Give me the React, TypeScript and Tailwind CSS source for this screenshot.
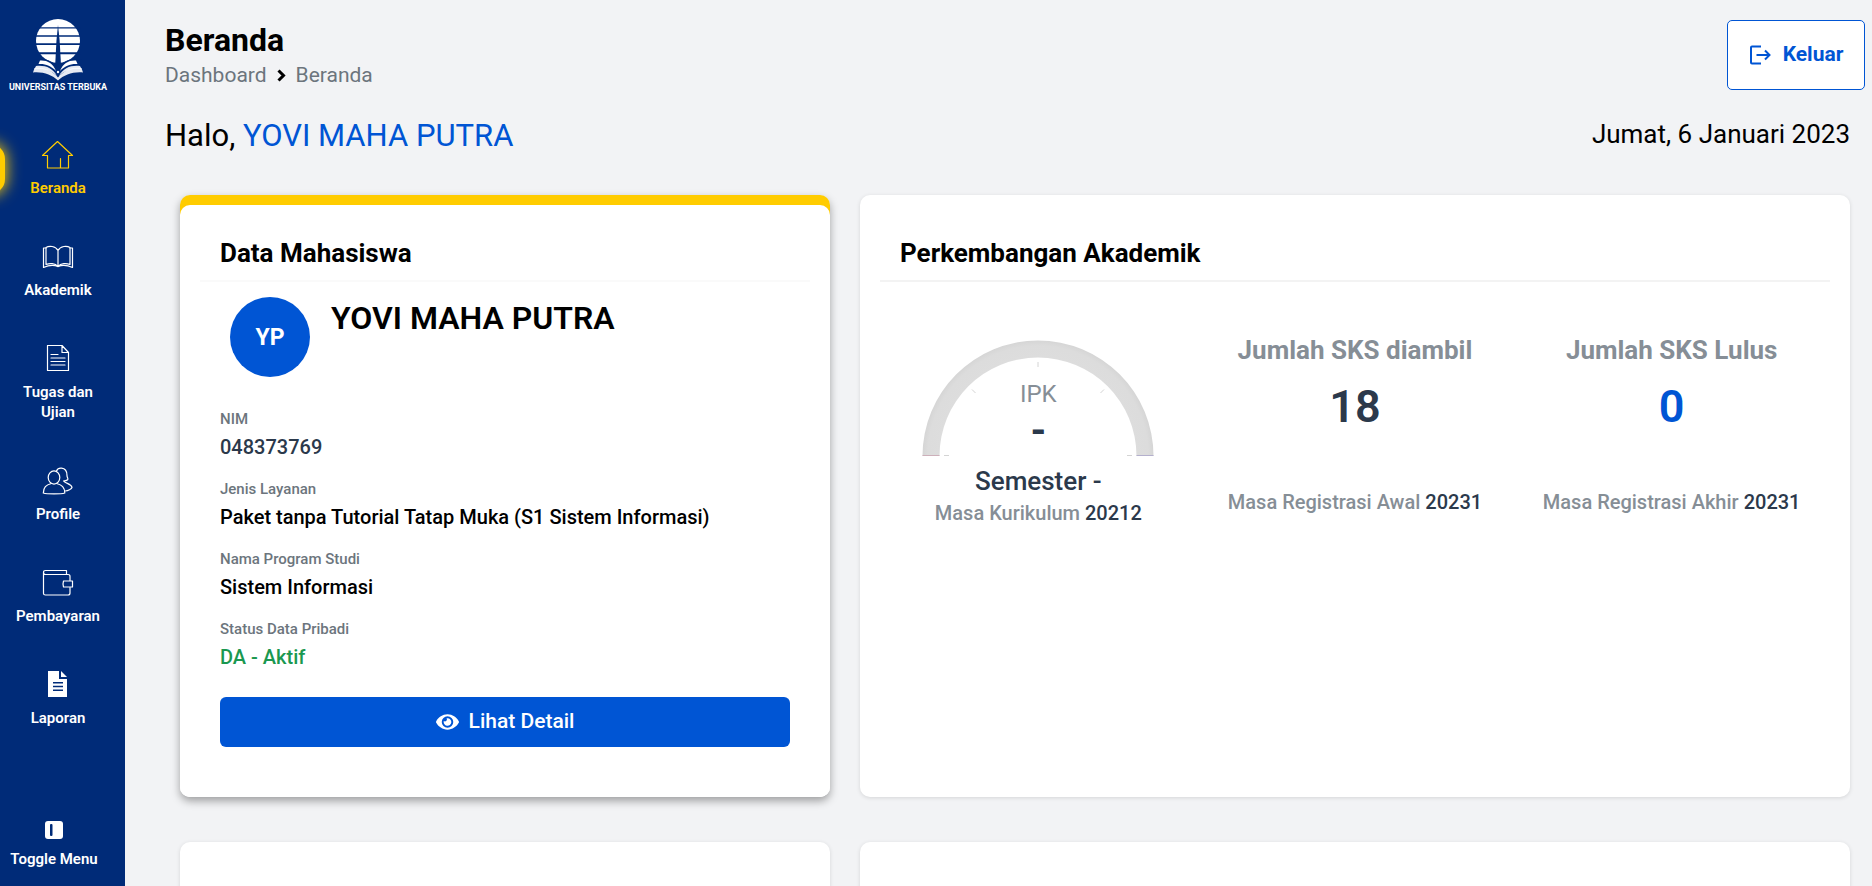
import type { ReactNode } from "react";

function LineIcon({ children }: { children: ReactNode }) {
  return (
    <svg
      className="h-7 w-8"
      viewBox="0 0 32 28"
      fill="none"
      stroke="currentColor"
      strokeWidth="1.2"
      strokeLinejoin="round"
      strokeLinecap="round"
      aria-hidden="true"
    >
      {children}
    </svg>
  );
}

const menu: { label: string; active?: boolean; icon: ReactNode }[] = [
  {
    label: "Beranda",
    active: true,
    icon: (
      <LineIcon>
        <path d="M5.5 14.5H0.5L15.5 0.5L30.5 14.5H26.5V27H5.5ZM18.5 26.5V17.5" />
      </LineIcon>
    ),
  },
  {
    label: "Akademik",
    icon: (
      <LineIcon>
        <path d="M16 7.5C13.5 2.7 7 2.7 4 4.5V21.5C7.5 20 13 20 16 23.5C19 20 24.5 20 28 21.5V4.5C25 2.7 18.5 2.7 16 7.5ZM16 7.5V23.5" />
        <path d="M4 5H1.5V24.5C6 22.5 12 22 16 23.5C20 22 26 22.5 30.5 24.5V5H28" />
      </LineIcon>
    ),
  },
  {
    label: "Tugas dan Ujian",
    icon: (
      <LineIcon>
        <path d="M20 0.5H5.5V25.5H26.5V7.5ZM20 0.5V7.5H26.5M9 9.5H16M9 13H23M9 16.5H23M9 20H23" />
      </LineIcon>
    ),
  },
  {
    label: "Profile",
    icon: (
      <LineIcon>
        <ellipse cx="12" cy="10.5" rx="5.8" ry="6.6" />
        <path d="M9.3 16.5C4 18 1.5 20 1.3 26C5 27.2 19 27.2 22.8 26C22.6 20 20 18 14.7 16.5" />
        <path d="M14.5 4C15.5 1.7 17.5 1 19.5 1.2C23.5 1.6 25 4.5 25 8.5C25 10.5 26.3 11.5 25.8 12.5C24.8 13.7 22.5 13.7 21.5 14C23.5 16.5 29.5 17 30 20.5C29.5 22 26 23.8 23.3 24" />
      </LineIcon>
    ),
  },
  {
    label: "Pembayaran",
    icon: (
      <LineIcon>
        <path d="M28 11.5V7.5Q28 5.5 26 5.5H3.5Q1.5 5.5 1.5 3.5Q1.5 1.5 3.5 1.5H24.5V5.5M1.5 3.5V24.5Q1.5 26 3.5 26H26Q28 26 28 24V18.5" />
        <path d="M21.5 12H30.5V18H21.5Q20.5 15 21.5 12Z" />
      </LineIcon>
    ),
  },
  {
    label: "Laporan",
    icon: (
      <svg className="h-7 w-8" viewBox="0 0 32 28" fill="currentColor" aria-hidden="true">
        <path
          fillRule="evenodd"
          d="M6 0H17V8H25V26H6ZM11 11H21V12.5H11ZM11 14.7H21V16.2H11ZM11 18.4H21V20H11Z"
        />
        <path d="M19 0L25 6H19Z" />
      </svg>
    ),
  },
];

function Logo() {
  return (
    <div className="flex flex-col items-center text-white">
      <svg className="h-[63px] w-[52px]" viewBox="0 0 52 63" fill="currentColor" aria-hidden="true">
        <circle cx="26" cy="23" r="22" />
        <g fill="#002b78">
          <path d="M3 9.2H49V10.6H3ZM3 17.2H49V18.8H3ZM3 25.3H49V27H3ZM3 34.3H49V36.3H3Z" />
          <path d="M26 7L27.6 22L29.4 54H22.8L24.5 22Z" />
          <path d="M2 42C12 39 22 42 26 52C30 42 40 39 50 42V63H2Z" />
        </g>
        <path d="M8 42.5C15 42 21 45 24 53C19 47.5 13 45.5 6.5 46Z" />
        <path d="M44 42.5C37 42 31 45 28 53C33 47.5 39 45.5 45.5 46Z" />
        <path d="M4 48C13 47 21 50 25 58C19 52 11 50 2.5 51Z" opacity="0.9" />
        <path d="M48 48C39 47 31 50 27 58C33 52 41 50 49.5 51Z" opacity="0.9" />
        <path d="M2.5 50C12 48.5 21 53 26 59.5C31 53 40 48.5 49.5 50L51 54.5C41 53.5 32 57 26 62.5C20 57 11 53.5 1 54.5Z" opacity="0.9" />
        <circle cx="26" cy="54" r="1.2" />
      </svg>
      <span className="text-[9px] leading-[12px] font-bold whitespace-nowrap">UNIVERSITAS TERBUKA</span>
    </div>
  );
}

function Sidebar() {
  return (
    <aside className="relative flex w-[125px] shrink-0 flex-col items-center overflow-hidden bg-[#002b78] pt-[18px] pr-[9px] pb-[17px]">
      <Logo />
      <nav className="mt-12 w-full">
        <ul className="flex flex-col gap-[45px]">
          {menu.map((item) => (
            <li key={item.label} className="relative">
              {item.active && (
                <span className="absolute top-[3px] -left-[45px] h-[50px] w-[50px] rounded-[15px] bg-[#ffcc00] shadow-[0_0_15px_1px_#ffcc00]" />
              )}
              <a
                href="#"
                className={`flex flex-col items-center gap-[9px] text-center text-[15px] leading-5 font-semibold ${
                  item.active ? "text-[#ffcc00]" : "text-white"
                }`}
              >
                {item.icon}
                <span className="max-w-[90px]">{item.label}</span>
              </a>
            </li>
          ))}
        </ul>
      </nav>
      <button
        type="button"
        className="mt-auto mr-2 flex flex-col items-center gap-[10px] text-[15px] leading-5 font-semibold whitespace-nowrap text-white"
      >
        <svg className="h-[18px] w-[18px]" viewBox="0 0 18 18" aria-hidden="true">
          <rect width="18" height="18" rx="3" fill="currentColor" />
          <rect x="5" y="3" width="2.5" height="12" rx="1" fill="#002b78" />
        </svg>
        Toggle Menu
      </button>
    </aside>
  );
}

function CardTitle({ children, line }: { children: ReactNode; line: string }) {
  return (
    <div className={`mx-5 border-b-2 px-5 pb-2 ${line}`}>
      <h2 className="text-[26px] leading-[38px] font-bold">{children}</h2>
    </div>
  );
}

function Field({ label, value, tone }: { label: string; value: string; tone: string }) {
  return (
    <div>
      <dt className="text-[15px] leading-6 font-medium text-[#6c757d]">{label}</dt>
      <dd className={`text-xl leading-8 font-medium ${tone}`}>{value}</dd>
    </div>
  );
}

function StudentCard() {
  return (
    <section className="h-[602px] rounded-[10px] bg-linear-to-b from-[#ffcc00] from-50% to-white to-50% pt-[10px] shadow-[0_4px_8px_rgba(0,0,0,0.35)]">
      <div className="h-full rounded-[10px] bg-white pt-[29px]">
        <CardTitle line="border-[#fafafa]">Data Mahasiswa</CardTitle>
        <div className="px-10 pt-[15px]">
          <div className="flex items-start gap-[21px] pl-[10px]">
            <div className="flex size-20 shrink-0 items-center justify-center rounded-full bg-[#0055d4] pt-[3px] text-[23px] font-bold text-white">
              YP
            </div>
            <h3 className="text-[32px] leading-[42px] font-semibold">YOVI MAHA PUTRA</h3>
          </div>
          <dl className="mt-[30px] flex flex-col gap-[14px]">
            <Field label="NIM" value="048373769" tone="text-[#2b394b]" />
            <Field label="Jenis Layanan" value="Paket tanpa Tutorial Tatap Muka (S1 Sistem Informasi)" tone="text-black" />
            <Field label="Nama Program Studi" value="Sistem Informasi" tone="text-black" />
            <Field label="Status Data Pribadi" value="DA - Aktif" tone="text-[#1a9850]" />
          </dl>
          <button
            type="button"
            className="mt-6 flex h-[50px] w-full items-center justify-center gap-[10px] rounded-md bg-[#0055d4] text-[21px] font-medium text-white"
          >
            <svg className="h-4 w-[23px]" viewBox="0 0 576 400" fill="currentColor" aria-hidden="true">
              <path
                transform="translate(0 -56)"
                d="M572.5 241.4C518.3 135.6 410.9 64 288 64S57.7 135.6 3.5 241.4a32.4 32.4 0 0 0 0 29.2C57.7 376.4 165.1 448 288 448s230.3-71.6 284.5-177.4a32.4 32.4 0 0 0 0-29.2zM288 400a144 144 0 1 1 144-144 143.9 143.9 0 0 1-144 144zm0-240a95.3 95.3 0 0 0-25.3 3.8 47.9 47.9 0 0 1-66.9 66.9A95.8 95.8 0 1 0 288 160z"
              />
            </svg>
            Lihat Detail
          </button>
        </div>
      </div>
    </section>
  );
}

function Gauge() {
  return (
    <div className="grid w-[232px] justify-items-center">
      <svg className="col-start-1 row-start-1 h-[116px] w-[232px]" viewBox="0 0 232 116" fill="none" aria-hidden="true">
        <defs>
          <radialGradient id="arc" gradientUnits="userSpaceOnUse" cx="116" cy="116" r="116">
            <stop offset="0.84" stopColor="#dddddd" />
            <stop offset="0.95" stopColor="#dcdcdc" />
            <stop offset="1" stopColor="#d5d5d5" />
          </radialGradient>
        </defs>
        <path d="M0.5 116A115.5 115.5 0 0 1 231.5 116H214.5A98.5 98.5 0 0 0 17.5 116Z" fill="url(#arc)" />
        <path d="M0.5 115.5H17.5" stroke="#cdb0ba" />
        <path d="M214.5 115.5H231.5" stroke="#b4b0cd" />
        <path
          d="M116 22V27M50 49.5L53.5 53M182 49.5L178.5 53M22 115.5H27M205 115.5H210"
          stroke="#d4d4d4"
        />
      </svg>
      <div className="col-start-1 row-start-1 pt-[38px] text-center">
        <p className="text-2xl leading-[32px] text-[#868e96]">IPK</p>
        <p className="text-[40px] leading-[42px] font-bold text-[#2b394b]">-</p>
      </div>
    </div>
  );
}

function Stat({ title, value, tone, note, code }: { title: string; value: string; tone: string; note: string; code: string }) {
  return (
    <div className="flex flex-col items-center pt-[49px] text-center">
      <h3 className="text-[26px] leading-[38px] font-bold whitespace-nowrap text-[#868e96]">{title}</h3>
      <p className={`mt-2 text-[45px] leading-[60px] font-semibold ${tone}`}>{value}</p>
      <p className="mt-[50px] text-xl leading-[30px] font-medium text-[#868e96]">
        {note} <span className="text-[#2b394b]">{code}</span>
      </p>
    </div>
  );
}

function ProgressCard() {
  return (
    <section className="h-[602px] rounded-[10px] bg-white pt-[39px] shadow-[0_1px_4px_rgba(0,0,0,0.12)]">
      <CardTitle line="border-[#f3f3f3]">Perkembangan Akademik</CardTitle>
      <div className="mx-5 grid grid-cols-3">
        <div className="flex flex-col items-center pt-[58px] text-center">
          <Gauge />
          <p className="mt-[7px] text-[26px] leading-9 font-medium text-[#2b394b]">Semester -</p>
          <p className="text-xl leading-7 font-medium text-[#868e96]">
            Masa Kurikulum <span className="text-[#2b394b]">20212</span>
          </p>
        </div>
        <Stat title="Jumlah SKS diambil" value="18" tone="text-[#2b394b]" note="Masa Registrasi Awal" code="20231" />
        <Stat title="Jumlah SKS Lulus" value="0" tone="text-[#0055d4]" note="Masa Registrasi Akhir" code="20231" />
      </div>
    </section>
  );
}

export default function App() {
  return (
    <div className="flex h-screen overflow-hidden bg-[#f2f3f5] font-[Roboto,'Liberation_Sans',sans-serif] text-black">
      <Sidebar />
      <main className="min-w-0 flex-1 overflow-hidden pt-5 pr-[7px] pl-10">
        <header className="flex items-start justify-between">
          <div>
            <h1 className="text-[32px] leading-10 font-bold">Beranda</h1>
            <nav aria-label="Breadcrumb" className="flex items-center text-[21px] leading-[30px] text-[#6c757d]">
              <a href="#">Dashboard</a>
              <svg className="mx-[10px] h-[13px] w-[9px]" viewBox="0 0 9 13" fill="none" stroke="#000" strokeWidth="3" aria-hidden="true">
                <path d="M1.5 1.5L6.5 6.5L1.5 11.5" />
              </svg>
              <span>Beranda</span>
            </nav>
          </div>
          <button
            type="button"
            className="flex h-[70px] w-[138px] items-center justify-center gap-3 rounded-[5px] border border-[#0055d4] bg-white text-[21px] font-bold text-[#0055d4]"
          >
            <svg className="h-5 w-[22px]" viewBox="0 0 22 20" fill="none" stroke="currentColor" strokeWidth="2" aria-hidden="true">
              <path d="M12 1.5H3Q2 1.5 2 2.5V17.5Q2 18.5 3 18.5H12M7.5 10H21M16 5.5L20.5 10L16 14.5" />
            </svg>
            Keluar
          </button>
        </header>
        <div className="mt-[25px] flex justify-between pr-[15px]">
          <p className="text-[31px] leading-[42px]">
            Halo, <span className="text-[#0055d4]">YOVI MAHA PUTRA</span>
          </p>
          <p className="text-[26px] leading-[38px]">Jumat, 6 Januari 2023</p>
        </div>
        <div className="mt-[38px] grid grid-cols-[2fr_3fr] gap-y-[45px]">
          <div className="px-[15px]">
            <StudentCard />
          </div>
          <div className="px-[15px]">
            <ProgressCard />
          </div>
          <div className="px-[15px]">
            <section className="h-40 rounded-[10px] bg-white shadow-[0_1px_4px_rgba(0,0,0,0.12)]" />
          </div>
          <div className="px-[15px]">
            <section className="h-40 rounded-[10px] bg-white shadow-[0_1px_4px_rgba(0,0,0,0.12)]" />
          </div>
        </div>
      </main>
    </div>
  );
}
